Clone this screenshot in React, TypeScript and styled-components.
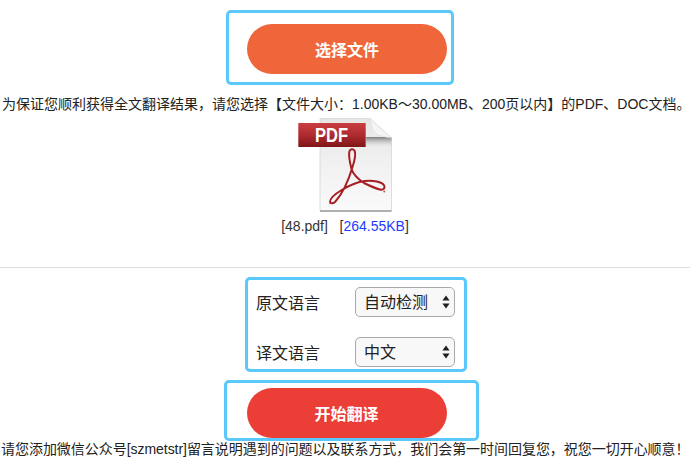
import React from 'react'
import styled, { createGlobalStyle } from 'styled-components'

const GlobalStyle = createGlobalStyle`
  html, body {
    margin: 0;
    padding: 0;
    background: #fff;
    overflow: hidden;
  }
  body {
    font-family: "Liberation Sans", "Noto Sans CJK SC", sans-serif;
    color: #222;
  }
`

const Page = styled.div`
  width: 690px;
  height: 459px;
  overflow: hidden;
  display: flex;
  flex-direction: column;
  align-items: center;
`

const Highlight = styled.div<{ $width: number; $height: number; $shift?: number }>`
  box-sizing: border-box;
  width: ${(p) => p.$width}px;
  height: ${(p) => p.$height}px;
  margin-left: ${(p) => p.$shift ?? 0}px;
  border: 3px solid #5ac8fa;
  border-radius: 5px;
  flex-shrink: 0;
`

const ButtonFrame = styled(Highlight)`
  display: flex;
  align-items: flex-start;
  justify-content: center;
`

const UploadFrame = styled(ButtonFrame)`
  margin-top: 10px;
  padding: 11px 0 0 14px;
`

const StartFrame = styled(ButtonFrame)`
  margin-top: 8px;
  padding: 5px 10px 0 0;
`

const PillButton = styled.button<{ $color: string }>`
  width: 200px;
  height: 50px;
  border: 0;
  padding: 0;
  border-radius: 25px;
  background: ${(p) => p.$color};
  color: #fff;
  font-family: inherit;
  font-size: 16px;
  font-weight: 700;
  flex-shrink: 0;
`

const Notice = styled.p`
  box-sizing: border-box;
  margin: 9px 0 0;
  width: 690px;
  padding-left: 2px;
  font-size: 14px;
  line-height: 20px;
  white-space: nowrap;
`

const FileBlock = styled.div`
  margin-top: 3px;
  display: flex;
  flex-direction: column;
  align-items: center;
`

const FileIcon = styled.svg`
  display: block;
  width: 96px;
  height: 96px;
`

const Caption = styled.div`
  margin-top: 4px;
  font-size: 14px;
  line-height: 18px;
  white-space: pre;
  color: #333;
`

const Size = styled.span`
  color: #1c3cff;
`

const Divider = styled.hr`
  width: 690px;
  margin: 32px 0 0;
  border: 0;
  border-top: 1px solid #ddd;
`

const LanguageFrame = styled(Highlight)`
  margin-top: 9px;
  padding: 7px 9px 0 8px;
  display: flex;
  flex-direction: column;
  gap: 20px;
`

const LanguageRow = styled.label`
  display: flex;
  align-items: center;
  justify-content: space-between;
  font-size: 16px;
  color: #222;
`

const LanguageSelect = styled.select`
  appearance: none;
  box-sizing: border-box;
  width: 100px;
  height: 30px;
  padding: 0 0 0 8px;
  border: 1px solid #aaa;
  border-radius: 5px;
  background-color: #f8f8f8;
  background-image: url("data:image/svg+xml,%3Csvg xmlns='http://www.w3.org/2000/svg' width='8' height='14'%3E%3Cpath d='M4 0.5 7.6 5.5H0.4z M0.4 8.5H7.6L4 13.5z' fill='%23222'/%3E%3C/svg%3E");
  background-repeat: no-repeat;
  background-position: right 4px center;
  font-family: inherit;
  font-size: 16px;
  color: #222;
`

const Footer = styled.p`
  box-sizing: border-box;
  margin: 0;
  width: 690px;
  padding-left: 1px;
  font-size: 14px;
  line-height: 16px;
  letter-spacing: -0.04px;
  white-space: nowrap;
`

const PdfGlyph = () => (
  <FileIcon viewBox="0 0 96 96">
    <defs>
      <linearGradient id="paper" x1="0" y1="0" x2="0" y2="1">
        <stop offset="0" stopColor="#e6e6e6" />
        <stop offset="0.45" stopColor="#f0f0f0" />
        <stop offset="1" stopColor="#fafafa" />
      </linearGradient>
      <linearGradient id="banner" x1="0" y1="0" x2="0" y2="1">
        <stop offset="0" stopColor="#cb3d40" />
        <stop offset="0.5" stopColor="#ad2c30" />
        <stop offset="1" stopColor="#7f1519" />
      </linearGradient>
      <linearGradient id="fold" x1="0" y1="1" x2="1" y2="0">
        <stop offset="0" stopColor="#ffffff" />
        <stop offset="1" stopColor="#e4e4e4" />
      </linearGradient>
      <linearGradient id="foldShadow" x1="0" y1="0" x2="0" y2="1">
        <stop offset="0" stopColor="#7d7d7d" />
        <stop offset="1" stopColor="#f0f0f0" stopOpacity="0" />
      </linearGradient>
    </defs>
    <path d="M23 1.5H73L94.5 21V94H23Z" fill="url(#paper)" stroke="#d6d6d6" strokeWidth="0.8" />
    <path d="M23 93H94.5V95H23Z" fill="#b0b0b0" />
    <path d="M69 20H94.5V31H69Z" fill="url(#foldShadow)" />
    <path d="M73 1.5C75 14 77 19 94.5 21Z" fill="url(#fold)" stroke="#d8d8d8" strokeWidth="0.5" />
    <rect x="1.3" y="6" width="67.4" height="24" fill="url(#banner)" />
    <text
      x="18"
      y="25.4"
      textLength="33"
      lengthAdjust="spacingAndGlyphs"
      fontFamily="'Liberation Sans', sans-serif"
      fontWeight="700"
      fontSize="21"
      fill="#fff"
    >
      PDF
    </text>
    <path
      d="M52.3 34.7C53 32 56 31.5 57.5 33.5C59 37 57.5 44 55.5 50C52 62 46 76 38 85C35.5 87 33 86.5 33 85C33 81 38 77 44.7 73C52 68.5 60 65 68 64C76 63 85 65 87.3 68.7C88 71 86.5 73 84 72.7C78 71.5 72 68.5 67 66C61 62 56 57 54.5 52C53 46 51.5 39 52.3 34.7Z"
      fill="none"
      stroke="#a51e22"
      strokeWidth="2"
    />
    <circle cx="87.3" cy="74.5" r="1.1" fill="#c25a5a" />
  </FileIcon>
)

const App: React.FC = () => {
  return (
    <Page>
      <GlobalStyle />
      <UploadFrame $width={228} $height={75} $shift={-10}>
        <PillButton $color="#ee6639">选择文件</PillButton>
      </UploadFrame>
      <Notice>为保证您顺利获得全文翻译结果，请您选择【文件大小：1.00KB～30.00MB、200页以内】的PDF、DOC文档。</Notice>
      <FileBlock>
        <PdfGlyph />
        <Caption>
          [48.pdf]{'   '}[<Size>264.55KB</Size>]
        </Caption>
      </FileBlock>
      <Divider />
      <LanguageFrame $width={222} $height={95} $shift={22}>
        <LanguageRow>
          原文语言
          <LanguageSelect defaultValue="auto">
            <option value="auto">自动检测</option>
          </LanguageSelect>
        </LanguageRow>
        <LanguageRow>
          译文语言
          <LanguageSelect defaultValue="zh">
            <option value="zh">中文</option>
          </LanguageSelect>
        </LanguageRow>
      </LanguageFrame>
      <StartFrame $width={255} $height={61} $shift={13}>
        <PillButton $color="#ea3e36">开始翻译</PillButton>
      </StartFrame>
      <Footer>请您添加微信公众号[szmetstr]留言说明遇到的问题以及联系方式，我们会第一时间回复您，祝您一切开心顺意！</Footer>
    </Page>
  )
}

export default App
